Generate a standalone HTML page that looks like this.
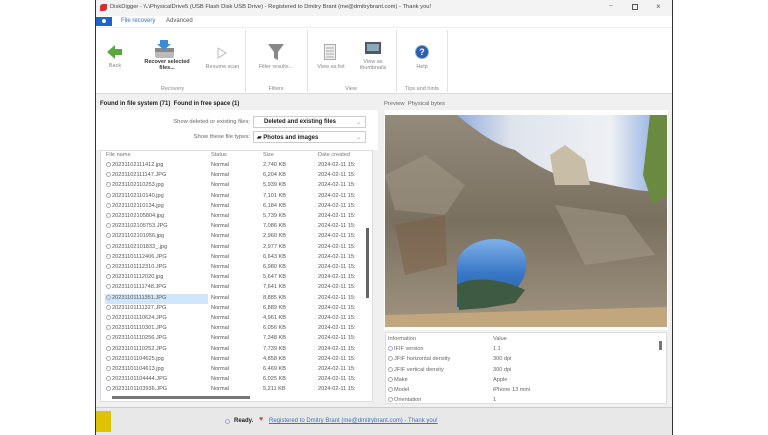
<!DOCTYPE html>
<html><head><style>
*{margin:0;padding:0;box-sizing:border-box}
body{width:768px;height:435px;background:#fff;position:relative;overflow:hidden;font-family:"Liberation Sans",sans-serif;font-size:6px;color:#333}
.a{position:absolute}
.win{left:95px;top:0;width:578px;height:435px;background:#f0f0f0;border:1px solid #333;border-top:none}
.rib{left:96px;top:28px;width:576px;height:66px;background:#fff;border-bottom:1px solid #ddd}
.lbl{font-size:5.5px;color:#888;text-align:center;position:absolute}
.sep{position:absolute;top:30px;width:1px;height:62px;background:#e2e2e2}
.row{position:absolute;left:105px;height:10px;font-size:5.6px;color:#555;white-space:nowrap}
.row span{position:absolute}
.dot{display:inline-block;width:5px;height:5px;border:1px solid #aab;border-radius:50%;vertical-align:-1px;margin-right:1px}
</style></head><body>
<div class="a win"></div>
<div class="a" style="left:96px;top:0;width:576px;height:16px;background:#f3f3f3"></div>
<div class="a" style="left:100px;top:4px;width:7px;height:7px;background:#c33;border-radius:40% 0 40% 0"></div>
<div class="a" style="left:110px;top:4px;font-size:5.8px;color:#444">DiskDigger - \\.\PhysicalDrive5 (USB Flash Disk USB Drive) - Registered to Dmitry Brant (me@dmitrybrant.com) - Thank you!</div>
<div class="a" style="left:609px;top:2px;font-size:7px;color:#777">–</div>
<div class="a" style="left:632px;top:4px;width:6px;height:6px;border:1px solid #555"></div>
<div class="a" style="left:656px;top:2px;font-size:8px;color:#555">×</div>
<div class="a" style="left:96px;top:16px;width:576px;height:12px;background:#fff;border-bottom:1px solid #eee"></div>
<div class="a" style="left:96px;top:17px;width:16px;height:9px;background:#1e64c8"></div>
<div class="a" style="left:102px;top:19px;width:4px;height:4px;border-radius:50%;background:#fff"></div>
<div class="a" style="left:121px;top:18px;font-size:6px;color:#3a6fc0">File recovery</div>
<div class="a" style="left:166px;top:18px;font-size:6px;color:#555">Advanced</div>
<div class="a rib"></div>
<div class="sep" style="left:245px"></div><div class="sep" style="left:307px"></div><div class="sep" style="left:396px"></div><div class="sep" style="left:447px"></div>
<svg class="a" style="left:107px;top:44px" width="16" height="16"><path d="M0 8 L8 1 V5 H15 V11 H8 V15Z" fill="#5aa83a"/></svg>
<div class="lbl" style="left:100px;top:63px;width:30px">Back</div>
<svg class="a" style="left:154px;top:39px" width="22" height="20"><rect x="1" y="9" width="19" height="10" rx="2" fill="#bbb"/><rect x="1" y="9" width="19" height="4" fill="#888"/><path d="M6 1 L14 1 L14 5 L17 5 L10 11 L3 5 L6 5Z" fill="#3b8ad6"/></svg>
<div class="lbl" style="left:138px;top:59px;width:58px;color:#333;font-weight:bold">Recover selected<br>files...</div>
<svg class="a" style="left:217px;top:47px" width="10" height="12"><path d="M1 1 L9 6 L1 11Z" fill="none" stroke="#bbb"/></svg>
<div class="lbl" style="left:200px;top:64px;width:45px">Resume scan</div>
<div class="lbl" style="left:150px;top:86px;width:45px">Recovery</div>
<svg class="a" style="left:268px;top:43px" width="16" height="18"><path d="M0 1 H16 L10 9 V17 L6 15 V9Z" fill="#888"/></svg>
<div class="lbl" style="left:252px;top:64px;width:48px">Filter results...</div>
<div class="lbl" style="left:252px;top:86px;width:48px">Filters</div>
<svg class="a" style="left:324px;top:44px" width="12" height="16"><rect x="0.5" y="0.5" width="11" height="15" fill="#eee" stroke="#aaa"/><path d="M2 4H10M2 7H10M2 10H10M2 13H10" stroke="#aaa"/></svg>
<div class="lbl" style="left:310px;top:64px;width:42px">View as list</div>
<svg class="a" style="left:365px;top:42px" width="16" height="12"><rect width="16" height="12" fill="#556"/><rect x="2" y="2" width="12" height="7" fill="#8ab"/></svg>
<div class="lbl" style="left:352px;top:59px;width:42px">View as<br>thumbnails</div>
<div class="lbl" style="left:330px;top:86px;width:42px">View</div>
<div class="a" style="left:415px;top:45px;width:14px;height:14px;border-radius:50%;background:#2a5db0;border:1px solid #8ab;color:#fff;font-size:9px;font-weight:bold;text-align:center;line-height:12px">?</div>
<div class="lbl" style="left:405px;top:64px;width:34px">Help</div>
<div class="lbl" style="left:398px;top:86px;width:48px">Tips and hints</div>
<div class="a" style="left:100px;top:101px;font-size:6px;font-weight:bold;color:#222">Found in file system (71) &nbsp;Found in free space (1)</div>
<div class="a" style="left:96px;top:110px;width:282px;height:40px;background:#fff"></div>
<div class="a" style="left:150px;top:119px;font-size:5.8px;color:#666;width:100px;text-align:right">Show deleted or existing files:</div>
<div class="a" style="left:253px;top:116px;width:113px;height:12px;border:1px solid #ccc;background:#fff;font-size:6px;font-weight:bold;padding:2px 0 0 10px;color:#222">Deleted and existing files<span style="position:absolute;right:4px;color:#999;font-weight:normal">⌄</span></div>
<div class="a" style="left:150px;top:134px;font-size:5.8px;color:#666;width:100px;text-align:right">Show these file types:</div>
<div class="a" style="left:253px;top:131px;width:113px;height:12px;border:1px solid #ccc;background:#fff;font-size:6px;font-weight:bold;padding:2px 0 0 3px;color:#222">▰ Photos and images<span style="position:absolute;right:4px;color:#999;font-weight:normal">⌄</span></div>
<div class="a" style="left:100px;top:150px;width:273px;height:252px;background:#fff;border:1px solid #ddd"></div>
<div class="row" style="top:152px;color:#777"><span style="left:1px">File name</span><span style="left:106px">Status</span><span style="left:158px">Size</span><span style="left:213px">Date created</span></div>
<div class="a" style="left:105px;top:294px;width:103px;height:10px;background:#cfe6fb"></div>
<div id="rows"></div>
<div class="a" style="left:366px;top:228px;width:3px;height:70px;background:#666"></div>
<div class="a" style="left:112px;top:396px;width:138px;height:3px;background:#777"></div>
<div class="a" style="left:384px;top:101px;font-size:5.8px;color:#666">Preview &nbsp;Physical bytes</div>
<div class="a" style="left:384px;top:110px;width:284px;height:220px;background:#fff"></div>
<svg class="a" style="left:385px;top:115px" width="282" height="212" viewBox="0 0 282 212">
<defs><linearGradient id="sk" x1="0" y1="0" x2="1" y2="0"><stop offset="0" stop-color="#2f62c8"/><stop offset=".45" stop-color="#dfe4ec"/><stop offset=".8" stop-color="#eef0f4"/><stop offset="1" stop-color="#7fa3dc"/></linearGradient>
<linearGradient id="rk" x1="0" y1="0" x2="0" y2="1"><stop offset="0" stop-color="#938a7c"/><stop offset=".5" stop-color="#7a7060"/><stop offset="1" stop-color="#a09480"/></linearGradient>
<linearGradient id="hs" x1="0" y1="0" x2="0" y2="1"><stop offset="0" stop-color="#7fb0e8"/><stop offset=".5" stop-color="#3a78c8"/><stop offset="1" stop-color="#2a5a9a"/></linearGradient></defs>
<rect width="282" height="212" fill="url(#sk)"/>
<path d="M0 0 H72 C90 15 110 30 130 35 C150 50 175 65 200 65 C230 70 260 80 282 75 V212 H0Z" fill="url(#rk)"/>
<path d="M265 0 H282 V80 L268 90 L258 60Z" fill="#6a8a40"/>
<path d="M165 40 L180 30 L200 45 L205 70 L170 70Z" fill="#c8bea8"/>
<path d="M72 150 C75 120 130 115 140 140 C145 160 135 180 100 192 L72 192Z" fill="url(#hs)"/>
<path d="M72 170 C90 160 120 165 140 175 L130 188 L100 193 L74 195Z" fill="#3e5a42"/>
<path d="M10 110 L60 100 L62 150 L20 160Z" fill="#7a5a40" opacity=".45"/>
<path d="M0 60 L40 40 L80 70 L60 100 L10 95Z" fill="#a49a8a" opacity=".5"/>
<path d="M170 90 L240 100 L270 140 L200 150Z" fill="#a59b8a" opacity=".5"/>
<path d="M0 200 L282 192 V212 H0Z" fill="#c2a67e"/>
</svg>
<div class="a" style="left:385px;top:332px;width:282px;height:72px;background:#fff;border:1px solid #ddd"></div>
<div class="a" style="left:659px;top:341px;width:3px;height:9px;background:#777"></div>
<div id="info"></div>
<div class="a" style="left:96px;top:407px;width:576px;height:28px;background:#e8e8e8;border-top:1px solid #ccc"></div>
<div class="a" style="left:96px;top:411px;width:15px;height:21px;background:#e0c200"></div>
<div class="a" style="left:225px;top:419px;width:5px;height:5px;border:1px solid #aac;border-radius:50%"></div>
<div class="a" style="left:234px;top:418px;font-size:6px;font-weight:bold;color:#222">Ready.</div>
<div class="a" style="left:259px;top:416px;font-size:7px;color:#c44">♥</div>
<div class="a" style="left:269px;top:418px;font-size:6px;color:#4a6fb0;text-decoration:underline">Registered to Dmitry Brant (me@dmitrybrant.com) - Thank you!</div>
<script>
var f=["20231102111412.jpg","20231102111147.JPG","20231102110253.jpg","20231102110140.jpg","20231102110134.jpg","20231102105804.jpg","20231102105753.JPG","20231102101956.jpg","20231102101833_.jpg","20231101112406.JPG","20231101112310.JPG","20231101112020.jpg","20231101111748.JPG","20231101111351.JPG","20231101111327.JPG","20231101110624.JPG","20231101110301.JPG","20231101110256.JPG","20231101110252.JPG","20231101104625.jpg","20231101104613.jpg","20231101104444.JPG","20231101103936.JPG"];
var s=["2,740","6,204","5,939","7,101","6,184","5,739","7,086","2,960","2,977","6,643","6,980","5,647","7,641","8,885","6,889","4,961","6,056","7,348","7,739","4,858","6,469","6,025","5,211"];
var h="";for(var i=0;i<f.length;i++){h+='<div class="row" style="top:'+(162+i*10.2)+'px"><span style="left:1px"><i class="dot"></i>'+f[i]+'</span><span style="left:106px">Normal</span><span style="left:158px">'+s[i]+' KB</span><span style="left:213px">2024-02-11 15:</span></div>';}
document.getElementById("rows").innerHTML=h;
var inf=[["Information","Value"],["IFIF version","1.1"],["JFIF horizontal density","300 dpi"],["JFIF vertical density","300 dpi"],["Make","Apple"],["Model","iPhone 13 mini"],["Orientation","1"]];
h="";for(i=0;i<inf.length;i++){h+='<div class="a" style="left:388px;top:'+(336+i*10.2)+'px;font-size:5.6px;color:#666;white-space:nowrap">'+(i?'<i class="dot"></i>':'')+inf[i][0]+'</div><div class="a" style="left:493px;top:'+(336+i*10.2)+'px;font-size:5.6px;color:#666">'+inf[i][1]+'</div>';}
document.getElementById("info").innerHTML=h;
</script>
</body></html>
